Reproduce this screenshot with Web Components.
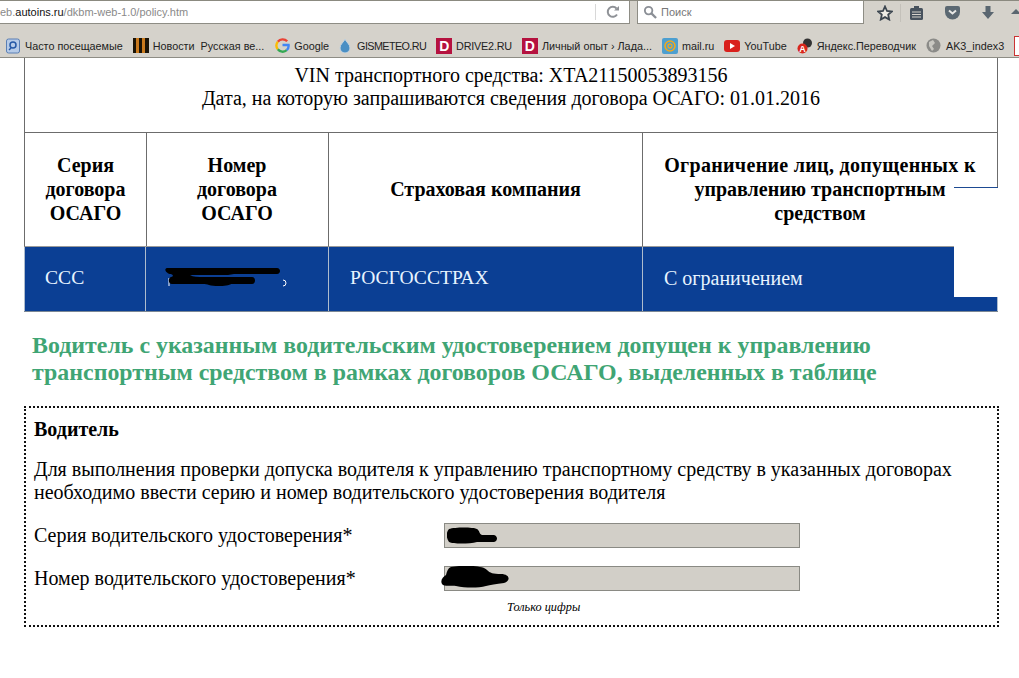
<!DOCTYPE html>
<html lang="ru">
<head>
<meta charset="utf-8">
<title>policy</title>
<style>
  html, body { margin: 0; padding: 0; background: #fff; overflow: hidden; }
  body { font-family: "Liberation Serif", serif; }
</style>
</head>
<body>
<browser-toolbar></browser-toolbar>
<bookmarks-bar></bookmarks-bar>
<policy-page></policy-page>

<script>
// Address bar, search box and toolbar buttons
class BrowserToolbar extends HTMLElement {
  constructor() {
    super();
    this.attachShadow({ mode: 'open' });
  }
  connectedCallback() {
    this.shadowRoot.innerHTML = `
      <style>
        :host { display: flex; align-items: stretch; height: 24px; box-sizing: border-box; background: #d5d2cb; border-top: 1px solid #8b8a80; font: 11px "Liberation Sans", sans-serif; overflow: hidden; }
        .url { width: 630px; flex: none; box-sizing: border-box; background: #fff; border-bottom: 1px solid #8e8d85; border-right: 1px solid #8e8d85; display: flex; align-items: center; white-space: nowrap; overflow: hidden; color: #8a8a8a; }
        .url span.text { flex: 1; }
        .url b { font-weight: normal; color: #111; }
        .reload { width: 33px; height: 16px; border-left: 1px solid #d8d8d8; display: flex; align-items: center; justify-content: center; }
        .search { width: 227px; margin-left: 7px; flex: none; box-sizing: border-box; background: #fff; border: 1px solid #8e8d85; border-top: 0; display: flex; align-items: center; gap: 4px; padding-left: 5px; color: #777; }
        .tools { display: flex; align-items: center; margin-left: 13px; }
        .tools svg { flex: none; }
        .sep { flex: none; width: 1px; height: 18px; background: #c4c1ba; margin: 0 8px 0 7px; }
      </style>
      <div class="url">
        <span class="text">eb.<b>autoins.ru</b>/dkbm-web-1.0/policy.htm</span>
        <div class="reload">
          <svg width="14" height="14" viewBox="0 0 14 14" fill="none"><path d="M11 9.500A5 5 0 1 1 10.500 3.500" stroke="#8f9297" stroke-width="2"/><path d="M8 5.500h5V1z" fill="#8f9297"/></svg>
        </div>
      </div>
      <div class="search">
        <svg width="14" height="14" viewBox="0 0 15 15" fill="none"><circle cx="6" cy="6" r="4" stroke="#8b8f96" stroke-width="2"/><path d="M9 9l5 5" stroke="#8b8f96" stroke-width="2.400"/></svg>
        <span>Поиск</span>
      </div>
      <div class="tools">
        <svg width="16" height="16" viewBox="0 0 16 16"><path d="M8 1.500l2 4.500 4.800.5-3.600 3.200 1 4.800L8 12.100l-4.200 2.400 1-4.800L1.200 6.500 6 6z" fill="#eeece6" stroke="#3c4650" stroke-width="1.800"/></svg>
        <span class="sep"></span>
        <svg width="15" height="16" viewBox="0 0 15 16"><rect x="1" y="3" width="13" height="12" rx="1.500" fill="#47525d"/><rect x="5" y="1" width="5" height="3" fill="#47525d"/><path d="M3 7h9M3 9.500h9M3 12h9" stroke="#d5d2cb"/></svg>
        <svg width="17" height="15" viewBox="0 0 17 15" style="margin-left:20px"><path d="M1 3a2 2 0 0 1 2-2h11a2 2 0 0 1 2 2v4a7.500 7.500 0 0 1-15 0z" fill="#5b6872"/><path d="M5 5.500l3.500 3 3.500-3" fill="none" stroke="#e8e8e6" stroke-width="2"/></svg>
        <svg width="14" height="15" viewBox="0 0 14 15" style="margin-left:20px"><path d="M4.500 1h5v6H13l-6 7-6-7h3.500z" fill="#5a6670"/></svg>
        <svg width="10" height="15" viewBox="0 0 10 15" style="margin-left:16px"><path d="M5 4l5 5H0z" fill="#5a6670"/></svg>
      </div>
    `;
  }
}

// One bookmark: icon in the slot, label as attribute
class BookmarkItem extends HTMLElement {
  constructor() {
    super();
    this.attachShadow({ mode: 'open' });
  }
  connectedCallback() {
    this.shadowRoot.innerHTML = `
      <style>
        :host { display: inline-flex; align-items: center; gap: 4px; flex: none; white-space: nowrap; }
        .ic { width: 16px; height: 16px; display: flex; align-items: center; justify-content: center; }
      </style>
      <span class="ic"><slot></slot></span>
      <span>${this.getAttribute('label')}</span>
    `;
  }
}

class BookmarksBar extends HTMLElement {
  constructor() {
    super();
    this.attachShadow({ mode: 'open' });
  }
  connectedCallback() {
    this.shadowRoot.innerHTML = `
      <style>
        :host { display: flex; align-items: center; height: 34px; box-sizing: border-box; padding: 13px 0 3px 5px; background: #d5d2cb; border-bottom: 1px solid #8e8d85; font: 10.800px "Liberation Sans", sans-serif; color: #222; overflow: hidden; gap: 10px; }
      </style>
      <slot></slot>
    `;
    this.innerHTML = `
      <bookmark-item label="Часто посещаемые"><svg width="15" height="16" viewBox="0 0 15 16"><rect x=".5" y="1" width="13" height="14" rx="2" fill="#b6cbe8" stroke="#5a7fb5"/><circle cx="7" cy="7" r="3" fill="none" stroke="#2458a6" stroke-width="1.500"/><path d="M5 10l-2 2" stroke="#2458a6" stroke-width="1.500"/></svg></bookmark-item>
      <bookmark-item label="Новости&nbsp;&nbsp;Русская ве..."><svg width="16" height="16" viewBox="0 0 16 16"><rect width="16" height="15" fill="#1a1408"/><rect x="3" width="3" height="15" fill="#c97a1e"/><rect x="9" width="3" height="15" fill="#c97a1e"/></svg></bookmark-item>
      <bookmark-item label="Google"><svg width="15" height="15" viewBox="0 0 16 16" fill="none" stroke-width="2.500"><path d="M13 3.500A6.500 6.500 0 0 0 3 4" stroke="#ea4335"/><path d="M3 4a6.500 6.500 0 0 0 0 8" stroke="#fbbc05"/><path d="M3 12a6.500 6.500 0 0 0 9.500 1" stroke="#34a853"/><path d="M12.500 13a6.500 6.500 0 0 0 2-5.500H8" stroke="#4285f4"/></svg></bookmark-item>
      <bookmark-item style="letter-spacing:-.6px;margin-left:-2px" label="GISMETEO.RU"><svg width="12" height="15" viewBox="0 0 12 15"><path d="M6 1c1 3 5 5 5 9a5 5 0 0 1-10 0c0-4 4-6 5-9z" fill="#4a8fc4" stroke="#c5d4e0"/></svg></bookmark-item>
      <bookmark-item style="letter-spacing:-.2px" label="DRIVE2.RU"><drive-mark></drive-mark></bookmark-item>
      <bookmark-item label="Личный опыт › Лада..."><drive-mark></drive-mark></bookmark-item>
      <bookmark-item label="mail.ru"><svg width="16" height="16" viewBox="0 0 16 16" fill="none"><rect width="16" height="16" rx="2" fill="#4d9fd0"/><circle cx="8" cy="8" r="5" stroke="#f2a81d" stroke-width="1.600"/><circle cx="8" cy="8" r="2" stroke="#f2a81d" stroke-width="1.300"/></svg></bookmark-item>
      <bookmark-item label="YouTube"><svg width="16" height="12" viewBox="0 0 16 12"><rect width="16" height="12" rx="3" fill="#d9201c"/><path d="M6 3l5 3-5 3z" fill="#fff"/></svg></bookmark-item>
      <bookmark-item label="Яндекс.Переводчик"><svg width="16" height="16" viewBox="0 0 16 16"><circle cx="10.500" cy="5" r="4.500" fill="#333"/><circle cx="5.500" cy="10.500" r="5" fill="#d8261c"/><text x="5.500" y="14" font-family="Liberation Sans" font-size="9" font-weight="700" fill="#fff" text-anchor="middle">A</text></svg></bookmark-item>
      <bookmark-item label="AK3_index3"><svg width="15" height="15" viewBox="0 0 15 15"><circle cx="7.500" cy="7.500" r="7" fill="#8b8b88"/><path d="M3 4l4-2 2 3-3 3 2 3-2 2-3-5z" fill="#c9c8c2"/></svg></bookmark-item>
      <span style="flex:none;width:6px;height:18px;background:#fff;border:1px solid #c33"></span>
    `;
  }
}

class DriveMark extends HTMLElement {
  constructor() {
    super();
    this.attachShadow({ mode: 'open' });
    this.shadowRoot.innerHTML = `
      <style>
        :host { display: flex; align-items: center; justify-content: center; width: 16px; height: 16px; background: #b5123f; color: #fff; font: bold 14px "Liberation Sans", sans-serif; }
      </style>D`;
  }
}

// Black marker strokes over redacted values
class RedactBlob extends HTMLElement {
  constructor() {
    super();
    this.attachShadow({ mode: 'open' });
  }
  connectedCallback() {
    const w = this.getAttribute('w'), h = this.getAttribute('h');
    this.shadowRoot.innerHTML = `
      <style>:host { position: absolute; left: ${this.getAttribute('x')}px; top: ${this.getAttribute('y')}px; line-height: 0; }</style>
      <svg width="${w}" height="${h}" viewBox="0 0 ${w} ${h}"><path d="${this.getAttribute('d')}" fill="#000"/></svg>
    `;
  }
}

class PolicyTable extends HTMLElement {
  constructor() {
    super();
    this.attachShadow({ mode: 'open' });
  }
  connectedCallback() {
    this.shadowRoot.innerHTML = `
      <style>
        :host { display: block; position: relative; width: 974px; font-size: 20px; }
        .info { box-sizing: border-box; height: 75px; padding-top: 6px; border: solid #6c6c6c; border-width: 0 1px 1px; text-align: center; font-size: 20px; line-height: 23px; color: #000; }
        .row { display: grid; grid-template-columns: 122px 183px 314px 1fr; }
        .head { height: 114px; }
        .head div { display: flex; align-items: center; justify-content: center; box-sizing: border-box; padding: 0 20px 2px; text-align: center; font-weight: bold; font-size: 20px; line-height: 24px; border-right: 1px solid #6c6c6c; border-bottom: 1px solid #9a9a9a; }
        .head div:first-child { border-left: 1px solid #6c6c6c; width: 123px; }
        .wide { letter-spacing: .3px; }
        .body { height: 65px; background: #0b3f94; color: #e8f4ff; border-bottom: 1px solid #7b8794; box-sizing: border-box; }
        .body div { display: flex; align-items: center; padding: 0 0 2px 21px; font-size: 19.600px; border-right: 1px solid #aebccd; }
        .body div:first-child { border-left: 1px solid #aebccd; width: 122px; box-sizing: border-box; padding-left: 20px; }
        .body div:last-child { font-size: 20px; }
        .cover { position: absolute; left: 930px; top: 129px; width: 44px; height: 110px; background: #fff; border-top: 1px solid #1d4a92; box-sizing: border-box; }
        .marks { position: absolute; left: 143px; top: 214px; }
      </style>
      <div class="info">VIN транспортного средства: XTA21150053893156<br>Дата, на которую запрашиваются сведения договора ОСАГО: 01.01.2016</div>
      <div class="row head">
        <div>Серия<br>договора<br>ОСАГО</div>
        <div>Номер<br>договора<br>ОСАГО</div>
        <div>Страховая компания</div>
        <div><span><span class="wide">Ограничение лиц, допущенных к</span><br>управлению транспортным средством</span></div>
      </div>
      <div class="row body">
        <div>ССС</div>
        <div></div>
        <div>РОСГОССТРАХ</div>
        <div>С ограничением</div>
      </div>
      <div class="cover"></div>
      <svg class="marks" width="124" height="16" viewBox="0 0 124 16" fill="none" stroke="#fff"><path d="M2 6v8M116 8a3 3 0 0 1 3 3 3 3 0 0 1-3 3"/></svg>
      <redact-blob x="139" y="208" w="118" h="22" d="M4 2h110c4 0 4 6 0 6H71c-2 0-4 1-6 1H27c3 2 8 2 14 2h48c4 0 4 7 0 7H68c-2 2-16 3-22 1-2-1-4-1-6-1H9c-4 0-4-6-1-7 3-1 2-2 0-3-4 0-8-5-4-6z"></redact-blob>
    `;
  }
}

class DriverForm extends HTMLElement {
  constructor() {
    super();
    this.attachShadow({ mode: 'open' });
  }
  connectedCallback() {
    this.shadowRoot.innerHTML = `
      <style>
        :host { display: block; position: relative; box-sizing: border-box; width: 975px; height: 221px; padding: 10px 8px 9px; border: 2px dotted #111; font-size: 20px; line-height: 23px; }
        h3 { margin: 0; font-size: 20px; line-height: 23px; }
        p { margin: 17px 0 0; }
        .field { display: grid; grid-template-columns: 410px 356px; align-items: center; height: 25px; }
        .first { margin-top: 19px; }
        .second { margin-top: 18px; }
        .input { height: 25px; box-sizing: border-box; background: #d2cfc8; border: 1px solid #8a8a84; }
        .hint { margin: 8px 0 0 473px; font: italic 12.300px/16px "Liberation Serif", serif; }
      </style>
      <h3>Водитель</h3>
      <p>Для выполнения проверки допуска водителя к управлению транспортному средству в указанных договорах необходимо ввести серию и номер водительского удостоверения водителя</p>
      <div class="field first"><span>Серия водительского удостоверения*</span><div class="input"></div></div>
      <div class="field second"><span>Номер водительского удостоверения*</span><div class="input"></div></div>
      <div class="hint">Только цифры</div>
      <redact-blob x="421" y="119" w="52" h="18" d="M2 2c6-2 24-2 28 0 3 2 2 5 5 6h12c4 1 4 6 0 7H30c-8 2-24 2-28 0-3-4-3-10 0-13z"></redact-blob>
      <redact-blob x="415" y="158" w="70" h="22" d="M10 1c10-2 32-2 36 3 3 3 6 4 14 4 9 0 10 7 3 9-8 1-14 2-18 3-8 2-20 2-30 0-4-1-12 1-14-2-2-4 1-7 4-9 1-4 2-7 5-8z"></redact-blob>
    `;
  }
}

class PolicyPage extends HTMLElement {
  constructor() {
    super();
    this.attachShadow({ mode: 'open' });
  }
  connectedCallback() {
    this.shadowRoot.innerHTML = `
      <style>
        :host { display: block; padding-left: 24px; color: #000; }
        h2 { margin: 20px 0 20px 8px; font-size: 23.900px; line-height: 27px; color: #3fa574; font-weight: bold; }
      </style>
      <policy-table></policy-table>
      <h2>Водитель с указанным водительским удостоверением допущен к управлению<br>транспортным средством в рамках договоров ОСАГО, выделенных в таблице</h2>
      <driver-form></driver-form>
    `;
  }
}

// Register the custom elements
customElements.define('browser-toolbar', BrowserToolbar);
customElements.define('bookmark-item', BookmarkItem);
customElements.define('drive-mark', DriveMark);
customElements.define('bookmarks-bar', BookmarksBar);
customElements.define('redact-blob', RedactBlob);
customElements.define('policy-table', PolicyTable);
customElements.define('driver-form', DriverForm);
customElements.define('policy-page', PolicyPage);
</script>
</body>
</html>
